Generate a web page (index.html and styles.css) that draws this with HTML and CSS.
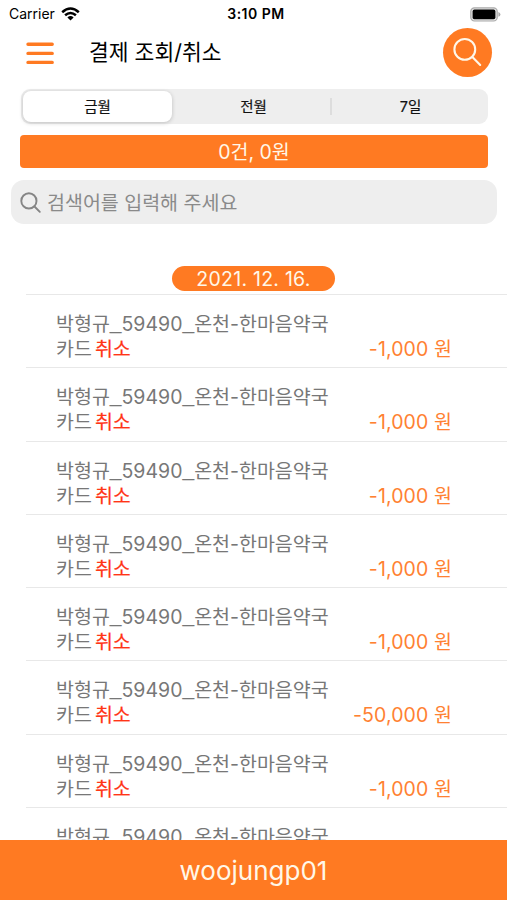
FILE: index.html
```html
<!DOCTYPE html>
<html lang="ko">
<head>
<meta charset="utf-8">
<title>결제 조회/취소</title>
<link rel="stylesheet" href="styles.css">
</head>
<body>
<div class="status">
  <div class="carrier"><span>Carrier</span>
    <svg width="19" height="14" viewBox="0 0 19 14" fill="none" stroke="#000" stroke-width="2.5"><path d="M1.2 5.2Q9.5-2.2 17.8 5.2M4.1 8.3Q9.5 3.6 14.9 8.3"/><path d="M6.4 10.4Q9.5 7.8 12.6 10.4L9.5 13.6z" fill="#000" stroke="none"/></svg>
  </div>
  <div class="time">3:10 PM</div>
  <svg class="battery" width="31" height="15" viewBox="0 0 31 15"><rect x=".8" y=".8" width="26.4" height="13.2" rx="3.6" fill="#e4e4e4" stroke="#aaa" stroke-width="1.2"/><rect x="2.6" y="2.6" width="22.8" height="9.6" rx="1.8"/><path d="M28.4 5q2 .8 2 2.4t-2 2.4z" fill="#aaa"/></svg>
</div>
<header class="header">
  <svg class="menu" width="28" height="23" viewBox="0 0 28 23" stroke="#ff7a22" stroke-width="3.4" stroke-linecap="round"><path d="M2 2.3h24.2M2 11.4h24.2M2 20.4h24.2"/></svg>
  <h1>결제 조회/취소</h1>
  <button class="find" aria-label="검색"><svg width="49" height="49" viewBox="0 0 49 49" fill="none" stroke="#fff7e8" stroke-width="2.1" stroke-linecap="round"><circle cx="21.8" cy="21.4" r="10.4"/><path d="M29.4 29l7.8 8"/></svg></button>
</header>
<nav class="tabs"><div class="tab on">금월</div><div class="tab">전월</div><div class="tab last">7일</div></nav>
<div class="total"><span>0건, 0원</span></div>
<div class="search">
  <svg width="22" height="22" viewBox="0 0 22 22" fill="none" stroke="#858585" stroke-width="1.9" stroke-linecap="round"><circle cx="8.9" cy="8.9" r="7.6"/><path d="M14.5 14.5l5.3 5.3"/></svg>
  <span>검색어를 입력해 주세요</span>
</div>
<main class="list">
  <div class="date"><span>2021. 12. 16.</span></div>
  <div class="row"><div class="name">박형규<i>_</i>59490<i>_</i>온천-한마음약국</div><div class="detail"><span class="card">카드</span><b>취소</b><span class="amount">-1,000 원</span></div></div>
  <div class="row"><div class="name">박형규<i>_</i>59490<i>_</i>온천-한마음약국</div><div class="detail"><span class="card">카드</span><b>취소</b><span class="amount">-1,000 원</span></div></div>
  <div class="row"><div class="name">박형규<i>_</i>59490<i>_</i>온천-한마음약국</div><div class="detail"><span class="card">카드</span><b>취소</b><span class="amount">-1,000 원</span></div></div>
  <div class="row"><div class="name">박형규<i>_</i>59490<i>_</i>온천-한마음약국</div><div class="detail"><span class="card">카드</span><b>취소</b><span class="amount">-1,000 원</span></div></div>
  <div class="row"><div class="name">박형규<i>_</i>59490<i>_</i>온천-한마음약국</div><div class="detail"><span class="card">카드</span><b>취소</b><span class="amount">-1,000 원</span></div></div>
  <div class="row"><div class="name">박형규<i>_</i>59490<i>_</i>온천-한마음약국</div><div class="detail"><span class="card">카드</span><b>취소</b><span class="amount">-50,000 원</span></div></div>
  <div class="row"><div class="name">박형규<i>_</i>59490<i>_</i>온천-한마음약국</div><div class="detail"><span class="card">카드</span><b>취소</b><span class="amount">-1,000 원</span></div></div>
  <div class="row"><div class="name">박형규<i>_</i>59490<i>_</i>온천-한마음약국</div></div>
</main>
<footer class="footer"><span>woojungp01</span></footer>
</body>
</html>
```
FILE: styles.css
```css
* { box-sizing: border-box; }
body {
  margin: 0; height: 900px; overflow: hidden; background: #fff; color: #000;
  display: flex; flex-direction: column;
  font-family: Inter, "Noto Sans CJK KR", sans-serif;
}
svg { display: block; flex: none; }
.status {
  height: 27px; flex: none; padding: 0 6px 0 9px;
  display: grid; grid-template-columns: 1fr auto 1fr; align-items: center;
  font-size: 14px; line-height: 28px;
}
.carrier { display: flex; align-items: center; gap: 6px; }
.carrier svg { margin-top: -1px; }
.time { font-weight: 600; font-size: 14px; letter-spacing: .5px; margin-right: -2px; }
.battery { justify-self: end; }
.header { height: 49px; flex: none; margin-top: 1px; display: flex; align-items: center; padding: 0 15px 0 26px; }
.menu { margin-top: 2px; }
.header h1 {
  margin: -2px auto 0 35px; font-size: 21.5px; line-height: 30px; font-weight: 400;
  letter-spacing: 0; white-space: nowrap;
}
.find { width: 49px; height: 49px; border: 0; padding: 0; border-radius: 50%; background: #ff7a22; }
.tabs {
  height: 35px; flex: none; margin: 12px 19px 0 21px; padding: 2px; border-radius: 9px;
  background: #eee; display: flex; font-size: 14.5px; line-height: 31px; font-weight: 400; color: #111;
  -webkit-text-stroke: .2px;
}
.tab { flex: 1; text-align: center; position: relative; }
.tab + .tab { padding-left: 6px; }
.tab.on { flex: none; width: 149px; background: #fff; border-radius: 8px; box-shadow: 0 1px 4px #0003; }
.tab.last::before { content: ""; position: absolute; left: 1px; top: 7px; width: 2px; height: 17px; background: #ddd; }
.total {
  height: 33px; flex: none; margin: 11px 19px 0 20px; border-radius: 4px;
  background: #ff7a22; color: #fff7e8; text-align: center; font-size: 19.5px; line-height: 35px;
}
.search {
  height: 44px; flex: none; margin: 12px 10px 0 11px; padding: 2px 9px 0; border-radius: 13px;
  background: #eee; color: #8a8a8a; display: flex; align-items: center; gap: 5px;
  font-size: 19.5px; line-height: 42px;
}
.list { flex: 1; min-height: 0; overflow: hidden; padding-top: 42px; }
.date {
  width: 163px; height: 25px; margin: 0 auto 3px 172px; border-radius: 13px;
  background: #ff7a22; color: #fff7e8; text-align: center; font-size: 19.5px; line-height: 27px;
  letter-spacing: .25px;
}
.row {
  height: 73.3px; margin-left: 26px; padding: 17px 55px 0 30px;
  border-top: 1px solid #e8e8e8; color: #777;
  font-size: 19.5px; line-height: 25px; white-space: nowrap;
}
.name { height: 25px; }
.name i { font: 21px/18px "Liberation Sans", sans-serif; vertical-align: 2px; }
.detail { display: flex; }
.detail b { font-weight: 400; -webkit-text-stroke: .2px; color: #ff3517; margin-left: 3px; }
.amount { margin-left: auto; color: #ff8132; letter-spacing: .1px; }
.footer {
  height: 60px; flex: none; background: #ff7a22; color: #fff7e8;
  text-align: center; font-size: 26px; line-height: 62px;
}
```
